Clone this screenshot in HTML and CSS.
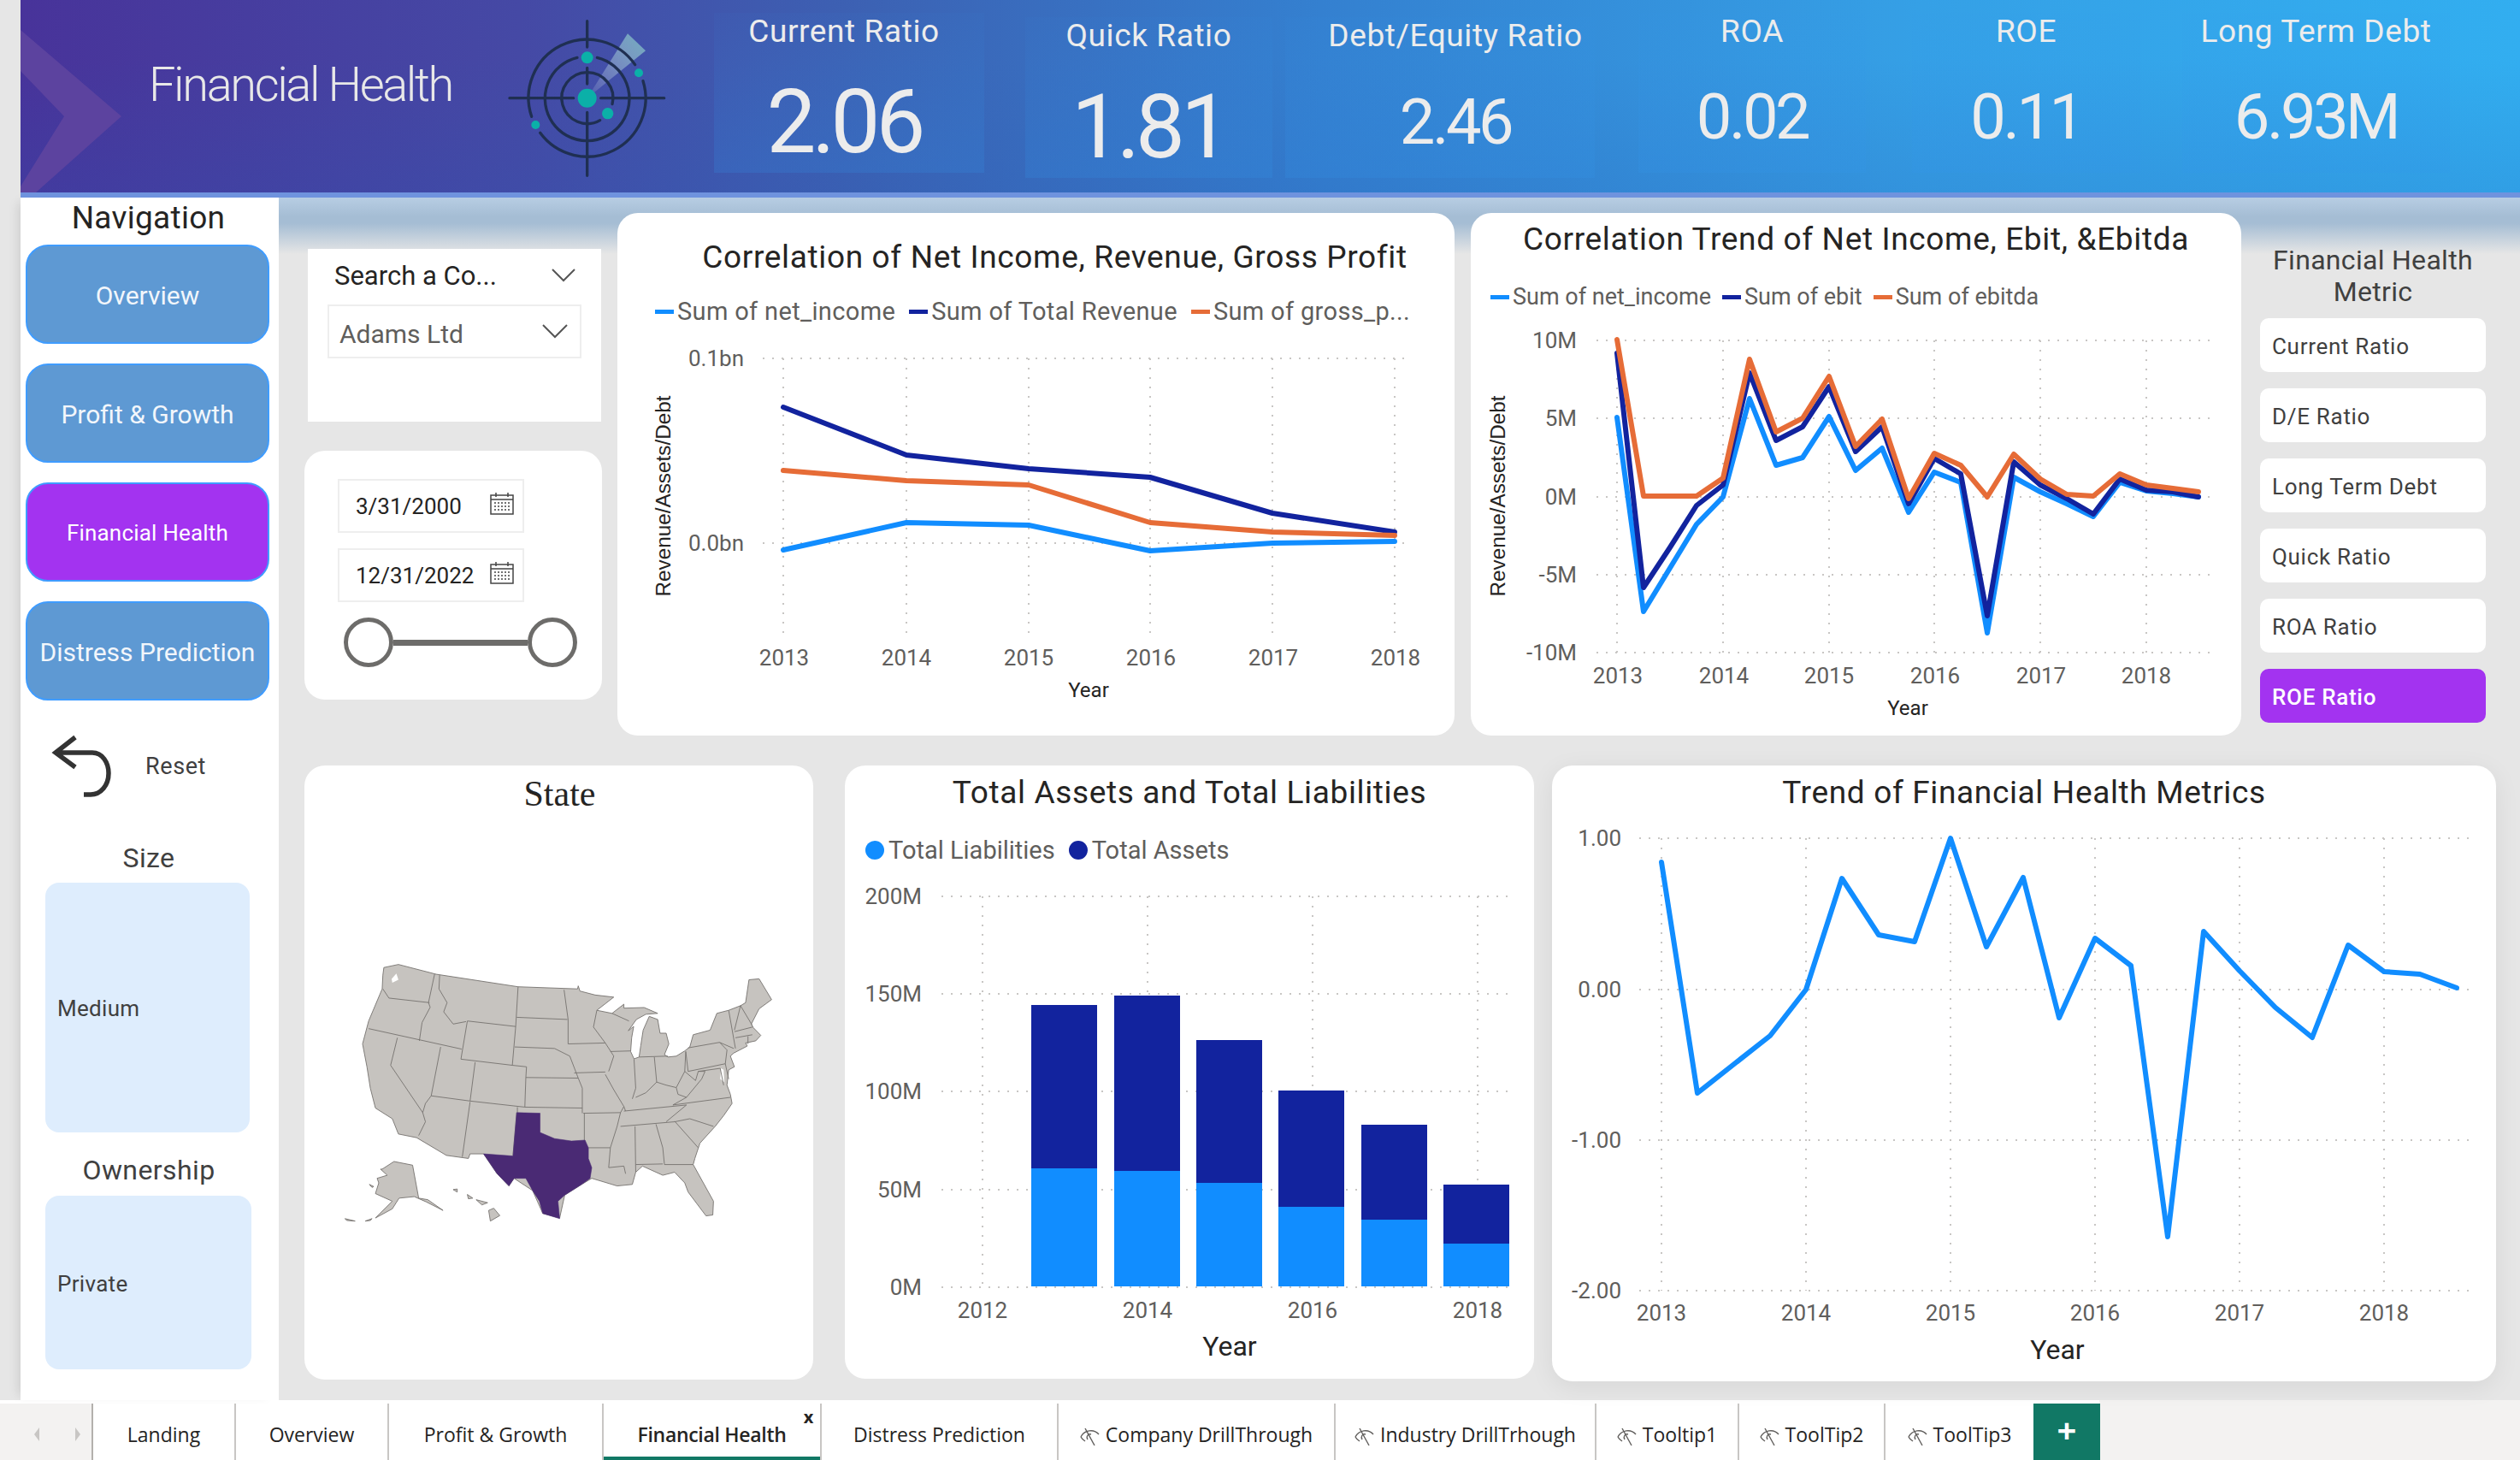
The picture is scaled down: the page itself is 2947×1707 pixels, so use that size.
FILE: index.html
```html
<!DOCTYPE html>
<html lang="en">
<head>
    <meta charset="UTF-8">
    <title>Financial Health</title>
    <link rel="stylesheet" href="styles.css">
</head>
<body>
    <header class="topbar">
        <svg class="chevron" width="130" height="225" viewBox="24 0 130 225"><polygon points="24,35 142,136 42,225 24,225 24,218 75,136 24,83" fill="#5c439f"/></svg>
        <h1 class="page-title">Financial Health</h1>
        <svg class="logo" width="220" height="210" viewBox="0 0 660 630">
            <defs>
                <linearGradient id="beam" x1="0" y1="1" x2="1" y2="0">
                    <stop offset="0" stop-color="#fff" stop-opacity=".05"/>
                    <stop offset="1" stop-color="#7fc9c4" stop-opacity=".75"/>
                </linearGradient>
            </defs>
            <polygon points="320,314 462,88 525,148" fill="url(#beam)"/>
            <g fill="none" stroke="#1f2f52" stroke-width="10" stroke-linecap="round">
                <path d="M488,197 A205,205 0 0 0 125,379"/>
                <path d="M155,436 A205,205 0 0 0 516,254"/>
                <path d="M355,172 A148,148 0 1 1 285,172"/>
                <path d="M408,335 A90,90 0 1 0 365,392"/>
                <path d="M320,44 V135 M320,208 V264 M320,364 V586 M48,314 H272 M368,314 H590"/>
            </g>
            <g fill="#0bb0a8">
                <circle cx="320" cy="314" r="33"/>
                <circle cx="320" cy="172" r="21"/>
                <circle cx="392" cy="368" r="20"/>
                <circle cx="501" cy="226" r="15"/>
                <circle cx="139" cy="408" r="15"/>
            </g>
        </svg>
        <div class="kpi kpi-a"><div class="kpi-label">Current Ratio</div><div class="kpi-big kpi-big-a">2.06</div></div>
        <div class="kpi kpi-b"><div class="kpi-label">Quick Ratio</div><div class="kpi-big kpi-big-b">1.81</div></div>
        <div class="kpi kpi-c"><div class="kpi-label">Debt/Equity Ratio</div><div class="kpi-mid kpi-mid-c">2.46</div></div>
        <div class="kpi kpi-d"><div class="kpi-label">ROA</div><div class="kpi-mid">0.02</div></div>
        <div class="kpi kpi-e"><div class="kpi-label">ROE</div><div class="kpi-mid">0.11</div></div>
        <div class="kpi kpi-f"><div class="kpi-label">Long Term Debt</div><div class="kpi-mid">6.93M</div></div>
    </header>

    <div class="body-row">
        <aside class="sidebar">
            <h2 class="nav-title">Navigation</h2>
            <nav class="nav-list">
                <div class="nav-btn">Overview</div>
                <div class="nav-btn">Profit &amp; Growth</div>
                <div class="nav-btn nav-active">Financial Health</div>
                <div class="nav-btn">Distress Prediction</div>
            </nav>
            <div class="reset">
                <svg width="72" height="78" viewBox="60 856 72 78"><path d="M88,862 L65,880 L88,897 M65,880 H108 C120,880 127,892 127,904 C127,918 118,929 106,929 H98" fill="none" stroke="#333" stroke-width="5.5"/></svg>
                <span>Reset</span>
            </div>
            <div class="side-label side-size">Size</div>
            <div class="side-box box-size">Medium</div>
            <div class="side-label side-own">Ownership</div>
            <div class="side-box box-own">Private</div>
        </aside>

        <main class="content">
            <div class="row-top">
                <div class="filters">
                    <section class="search-panel">
                        <div class="search-head">
                            <span>Search a Co...</span>
                            <svg width="28" height="16" viewBox="0 0 28 16"><polyline points="1,1 14,14 27,1" fill="none" stroke="#555" stroke-width="2"/></svg>
                        </div>
                        <div class="dropdown">
                            <span>Adams Ltd</span>
                            <svg width="30" height="17" viewBox="0 0 30 17"><polyline points="1,1 15,15 29,1" fill="none" stroke="#555" stroke-width="2"/></svg>
                        </div>
                    </section>
                    <section class="date-panel">
                        <div class="date-box">
                            <span>3/31/2000</span>
                            <svg width="28" height="26" viewBox="0 0 28 26"><use href="#cal"/></svg>
                        </div>
                        <div class="date-box">
                            <span>12/31/2022</span>
                            <svg width="28" height="26" viewBox="0 0 28 26">
                                <g id="cal" fill="none" stroke="#444" stroke-width="1.5">
                                    <rect x="1" y="3" width="26" height="22"/>
                                    <path d="M1,8 H27 M7,0 V5 M21,0 V5" />
                                    <path d="M5,12 H23 M5,16 H23 M5,20 H23" stroke-dasharray="2 2"/>
                                </g>
                            </svg>
                        </div>
                        <div class="slider">
                            <span class="knob"></span>
                            <span class="track"></span>
                            <span class="knob"></span>
                        </div>
                    </section>
                </div>

                <section class="card card-corr">
                    <h3 class="card-title title-corr">Correlation of Net Income, Revenue, Gross Profit</h3>
                    <div class="legend legend-corr">
                        <span class="key"><i class="dash c-light"></i>Sum of net_income</span>
                        <span class="key"><i class="dash c-dark"></i>Sum of Total Revenue</span>
                        <span class="key"><i class="dash c-orange"></i>Sum of gross_p...</span>
                    </div>
                    <svg class="chart" width="979" height="476" viewBox="722 384 979 476">
                        <g class="grid">
                            <path d="M892,419 H1648 M892,635 H1648"/>
                            <path d="M916,419 V746 M1060,419 V746 M1203,419 V746 M1345,419 V746 M1488,419 V746 M1631,419 V746"/>
                        </g>
                        <g class="tick end">
                            <text x="870" y="428">0.1bn</text>
                            <text x="870" y="644">0.0bn</text>
                        </g>
                        <g class="tick mid">
                            <text x="917" y="778">2013</text>
                            <text x="1060" y="778">2014</text>
                            <text x="1203" y="778">2015</text>
                            <text x="1346" y="778">2016</text>
                            <text x="1489" y="778">2017</text>
                            <text x="1632" y="778">2018</text>
                        </g>
                        <text class="axis-name" x="1273" y="815">Year</text>
                        <text class="axis-side" transform="translate(784 580) rotate(-90)" textLength="235" lengthAdjust="spacingAndGlyphs">Revenue/Assets/Debt</text>
                        <polyline class="line s-dark" points="916,476 1060,532 1203,548 1345,558 1488,600 1631,622"/>
                        <polyline class="line s-orange" points="916,550 1060,562 1203,567 1345,611 1488,622 1631,626"/>
                        <polyline class="line s-light" points="916,643 1060,611 1203,614 1345,644 1488,635 1631,633"/>
                    </svg>
                </section>

                <section class="card card-trend3">
                    <h3 class="card-title title-trend3">Correlation Trend of Net Income, Ebit, &amp;Ebitda</h3>
                    <div class="legend legend-trend3">
                        <span class="key"><i class="dash c-light"></i>Sum of net_income</span>
                        <span class="key"><i class="dash c-dark"></i>Sum of ebit</span>
                        <span class="key"><i class="dash c-orange"></i>Sum of ebitda</span>
                    </div>
                    <svg class="chart" width="901" height="493" viewBox="1720 367 901 493">
                        <g class="grid">
                            <path d="M1867,398 H2590 M1867,489 H2590 M1867,581 H2590 M1867,672 H2590 M1867,763 H2590"/>
                            <path d="M1891,398 V763 M2015,398 V763 M2139,398 V763 M2262,398 V763 M2386,398 V763 M2510,398 V763"/>
                        </g>
                        <g class="tick end">
                            <text x="1844" y="407">10M</text>
                            <text x="1844" y="498">5M</text>
                            <text x="1844" y="590">0M</text>
                            <text x="1844" y="681">-5M</text>
                            <text x="1844" y="772">-10M</text>
                        </g>
                        <g class="tick mid">
                            <text x="1892" y="799">2013</text>
                            <text x="2016" y="799">2014</text>
                            <text x="2139" y="799">2015</text>
                            <text x="2263" y="799">2016</text>
                            <text x="2387" y="799">2017</text>
                            <text x="2510" y="799">2018</text>
                        </g>
                        <text class="axis-name" x="2231" y="836">Year</text>
                        <text class="axis-side" transform="translate(1760 580) rotate(-90)" textLength="235" lengthAdjust="spacingAndGlyphs">Revenue/Assets/Debt</text>
                        <polyline class="line s-light" points="1891,488 1922,715 1953,664 1984,613 2015,581 2046,466 2077,544 2108,535 2139,487 2170,550 2201,524 2232,599 2262,552 2293,564 2324,740 2355,558 2386,575 2417,589 2448,604 2479,564 2510,574 2541,577 2571,581"/>
                        <polyline class="line s-dark" points="1891,413 1922,687 1953,640 1984,591 2015,567 2046,436 2077,515 2108,499 2139,452 2170,528 2201,499 2232,589 2262,536 2293,554 2324,720 2355,540 2386,567 2417,583 2448,601 2479,560 2510,573 2541,575 2571,581"/>
                        <polyline class="line s-orange" points="1891,397 1922,580 1953,580 1984,580 2015,559 2046,420 2077,505 2108,489 2139,440 2170,522 2201,490 2232,583 2262,530 2293,544 2324,581 2355,531 2386,560 2417,578 2448,580 2479,554 2510,567 2541,571 2571,575"/>
                    </svg>
                </section>

                <section class="metrics">
                    <h3 class="metrics-title">Financial Health<br>Metric</h3>
                    <div class="metric-btn">Current Ratio</div>
                    <div class="metric-btn">D/E Ratio</div>
                    <div class="metric-btn">Long Term Debt</div>
                    <div class="metric-btn">Quick Ratio</div>
                    <div class="metric-btn">ROA Ratio</div>
                    <div class="metric-btn metric-active">ROE Ratio</div>
                </section>
            </div>

            <div class="row-bottom">
                <section class="card card-map">
                    <h3 class="map-title">State</h3>
                    <svg class="chart" width="595" height="660" viewBox="40 176 1505 1848" preserveAspectRatio="none">
                        <path class="land" d="M275,675 L318,665 L430,697 L672,738 L848,745 L850,735 L855,752 L900,765 L955,772 L905,815 L950,825 L985,795 L985,808 L1045,806 L1085,825 L1050,828 L1022,845 L998,882 L1014,868 L1008,905 L1005,950 L1015,974 L1030,968 L1035,930 L1042,880 L1060,835 L1085,845 L1092,890 L1110,890 L1118,925 L1105,960 L1115,968 L1140,965 L1165,948 L1180,935 L1190,895 L1240,880 L1260,825 L1295,815 L1330,800 L1345,790 L1355,715 L1385,712 L1422,780 L1385,810 L1362,860 L1368,872 L1390,897 L1375,915 L1345,922 L1350,932 L1310,955 L1300,965 L1312,1000 L1295,1010 L1290,1060 L1300,1090 L1305,1120 L1280,1160 L1255,1195 L1210,1250 L1195,1300 L1190,1320 L1250,1440 L1248,1485 L1228,1488 L1175,1410 L1165,1380 L1135,1345 L1100,1355 L1040,1325 L1020,1345 L1010,1385 L965,1390 L890,1365 L860,1385 L810,1420 L795,1495 L745,1480 L715,1405 L660,1365 L645,1390 L610,1350 L570,1285 L530,1285 L525,1300 L460,1290 L372,1232 L318,1220 L300,1170 L250,1135 L235,1070 L225,1000 L212,925 L230,850 L270,745 L272,700 Z"/>
                        <path class="land" d="M270,1335 L305,1310 L360,1322 L378,1430 L405,1435 L450,1470 L400,1442 L365,1425 L320,1430 L300,1465 L250,1495 L300,1440 L250,1415 L260,1380 L255,1365 L285,1355 L265,1335 Z"/>
                        <path class="land" d="M585,1470 L600,1463 L618,1487 L590,1505 Z M480,1402 L492,1400 L492,1410 Z M522,1418 L538,1430 L525,1432 Z M548,1435 L582,1445 L565,1452 Z M160,1497 L190,1505 L165,1503 Z M220,1505 L240,1497 L235,1503 Z M232,1385 L245,1392 L240,1395 Z"/>
                        <path class="puget" d="M312,695 L318,715 L300,725 L298,712 Z M1272,1005 L1280,1010 L1282,1050 L1270,1040 Z"/>
                        <path class="borders" d="M272,745 L290,775 L410,790 M425,697 L407,790 L412,805 L388,855 L380,915 M230,875 L505,942 M440,700 L438,745 L462,790 L452,820 L480,860 L518,852 M522,850 L665,868 L655,995 L503,975 Z M672,738 L665,868 M668,838 L818,845 M808,748 L820,845 L820,925 M662,935 L780,940 L825,965 L850,1037 M655,995 L697,1000 L695,1035 L850,1037 M820,925 L930,922 M905,815 L895,870 L930,922 L955,965 L940,1015 M838,1020 L930,1017 M945,950 L1005,948 M950,825 L1000,850 M1015,975 L1020,1070 L1010,1105 M930,1025 L955,1075 L985,1130 L990,1145 M1075,968 L1082,1050 M1030,968 L1115,965 M1082,1050 L1110,1060 L1140,1068 L1165,1015 L1168,950 L1175,1015 L1285,990 M1175,938 L1268,920 L1290,945 L1285,990 M1268,920 L1310,940 M1295,815 L1315,940 M1330,800 L1312,880 M1330,800 L1365,865 M1312,885 L1365,870 M1315,905 L1365,895 M1352,900 L1352,925 M1285,990 L1295,1040 M1205,1015 L1270,1005 L1280,1060 M1140,1068 L1145,1090 L1170,1100 L1215,1040 L1225,1015 L1205,1015 L1197,1045 L1165,1015 M1130,1125 L1300,1100 M985,1145 L1170,1125 L1110,1180 M1020,1100 L1050,1085 L1082,1050 M1130,1125 L1170,1100 M975,1195 L1135,1180 L1180,1170 L1250,1195 M1135,1178 L1205,1265 M1080,1188 L1100,1265 L1105,1320 L1190,1320 M1018,1195 L1020,1345 M965,1195 L945,1265 L940,1330 L985,1325 L990,1350 M1020,1320 L1100,1318 M865,1152 L975,1150 L965,1195 M880,1265 L945,1265 M868,1152 L868,1240 M985,1130 L975,1150 M695,1035 L692,1132 L862,1135 M850,1037 L862,1070 L862,1152 M545,985 L530,1112 L692,1132 M670,1132 L670,1150 M443,935 L415,1095 L530,1112 M315,905 L295,995 L390,1150 L398,1120 L415,1095 M530,1115 L507,1295 M390,1150 L398,1180 L378,1225 M668,1150 L657,1290"/>
                        <polygon class="texas" points="668,1150 737,1152 737,1215 780,1235 830,1243 870,1240 880,1265 880,1300 890,1330 885,1365 860,1385 810,1420 790,1440 795,1497 745,1480 735,1440 715,1405 695,1365 660,1365 645,1390 610,1350 570,1285 657,1292"/>
                    </svg>
                </section>

                <section class="card card-bars">
                    <h3 class="card-title">Total Assets and Total Liabilities</h3>
                    <div class="legend legend-bars">
                        <span class="key"><i class="dot c-light"></i>Total Liabilities</span>
                        <span class="key"><i class="dot c-dark"></i>Total Assets</span>
                    </div>
                    <svg class="chart" width="806" height="598" viewBox="988 1014 806 598">
                        <g class="grid">
                            <path d="M1101,1048 H1766 M1101,1162 H1766 M1101,1276 H1766 M1101,1391 H1766 M1101,1505 H1766"/>
                            <path d="M1149,1048 V1505 M1342,1048 V1505 M1535,1048 V1505 M1728,1048 V1505"/>
                        </g>
                        <g class="tick end">
                            <text x="1078" y="1057">200M</text>
                            <text x="1078" y="1171">150M</text>
                            <text x="1078" y="1285">100M</text>
                            <text x="1078" y="1400">50M</text>
                            <text x="1078" y="1514">0M</text>
                        </g>
                        <g class="tick mid">
                            <text x="1149" y="1541">2012</text>
                            <text x="1342" y="1541">2014</text>
                            <text x="1535" y="1541">2016</text>
                            <text x="1728" y="1541">2018</text>
                        </g>
                        <text class="axis-name axis-big" x="1438" y="1585">Year</text>
                        <g class="f-dark">
                            <rect x="1206" y="1175" width="77" height="191"/>
                            <rect x="1303" y="1164" width="77" height="205"/>
                            <rect x="1399" y="1216" width="77" height="167"/>
                            <rect x="1495" y="1275" width="77" height="136"/>
                            <rect x="1592" y="1315" width="77" height="111"/>
                            <rect x="1688" y="1385" width="77" height="69"/>
                        </g>
                        <g class="f-light">
                            <rect x="1206" y="1366" width="77" height="138"/>
                            <rect x="1303" y="1369" width="77" height="135"/>
                            <rect x="1399" y="1383" width="77" height="121"/>
                            <rect x="1495" y="1411" width="77" height="93"/>
                            <rect x="1592" y="1426" width="77" height="78"/>
                            <rect x="1688" y="1454" width="77" height="50"/>
                        </g>
                    </svg>
                </section>

                <section class="card card-metrics">
                    <h3 class="card-title">Trend of Financial Health Metrics</h3>
                    <svg class="chart" width="1104" height="668" viewBox="1815 947 1104 668">
                        <g class="grid">
                            <path d="M1917,980 H2892 M1917,1157 H2892 M1917,1333 H2892 M1917,1509 H2892"/>
                            <path d="M1943,980 V1509 M2112,980 V1509 M2281,980 V1509 M2450,980 V1509 M2619,980 V1509 M2788,980 V1509"/>
                        </g>
                        <g class="tick end">
                            <text x="1896" y="989">1.00</text>
                            <text x="1896" y="1166">0.00</text>
                            <text x="1896" y="1342">-1.00</text>
                            <text x="1896" y="1518">-2.00</text>
                        </g>
                        <g class="tick mid">
                            <text x="1943" y="1544">2013</text>
                            <text x="2112" y="1544">2014</text>
                            <text x="2281" y="1544">2015</text>
                            <text x="2450" y="1544">2016</text>
                            <text x="2619" y="1544">2017</text>
                            <text x="2788" y="1544">2018</text>
                        </g>
                        <text class="axis-name axis-big" x="2406" y="1589">Year</text>
                        <polyline class="line s-light" points="1943,1008 1985,1278 2028,1244 2070,1211 2112,1157 2154,1027 2197,1093 2239,1101 2281,980 2323,1107 2366,1026 2408,1190 2450,1097 2492,1129 2535,1446 2577,1089 2619,1135 2661,1178 2704,1213 2746,1105 2788,1136 2830,1139 2873,1155"/>
                    </svg>
                </section>
            </div>
        </main>
    </div>

    <footer class="tabs">
        <div class="tab-arrows">
            <svg width="54" height="20" viewBox="0 0 54 20"><path d="M6,2 L0,10 L6,18 Z M48,2 L54,10 L48,18 Z" fill="#c8c6c4"/></svg>
        </div>
        <div class="tab tab-1">Landing</div>
        <div class="tab tab-2">Overview</div>
        <div class="tab tab-3">Profit &amp; Growth</div>
        <div class="tab tab-4 tab-active">Financial Health<span class="tab-close">x</span></div>
        <div class="tab tab-5">Distress Prediction</div>
        <div class="tab tab-6"><svg class="eye" width="24" height="24" viewBox="0 0 24 24"><use href="#eye-off"/></svg>Company DrillThrough</div>
        <div class="tab tab-7"><svg class="eye" width="24" height="24" viewBox="0 0 24 24"><use href="#eye-off"/></svg>Industry DrillTrhough</div>
        <div class="tab tab-8"><svg class="eye" width="24" height="24" viewBox="0 0 24 24"><use href="#eye-off"/></svg>Tooltip1</div>
        <div class="tab tab-9"><svg class="eye" width="24" height="24" viewBox="0 0 24 24"><use href="#eye-off"/></svg>ToolTip2</div>
        <div class="tab tab-10"><svg class="eye" width="24" height="24" viewBox="0 0 24 24">
            <g id="eye-off" fill="none" stroke="#605e5c" stroke-width="1.4">
                <path d="M1,13 C5,5 16,3 22,10 M6,18 C3,16 2,15 1,13 M13,10 C9,9 7,13 9,16"/>
                <path d="M6,3 L17,23"/>
            </g>
        </svg>ToolTip3</div>
        <div class="tab-add">+</div>
    </footer>
</body>
</html>
```

FILE: styles.css
```css
* {
    box-sizing: border-box;
}

html,
body {
    margin: 0;
    padding: 0;
}

body {
    width: 2947px;
    height: 1707px;
    overflow: hidden;
    background: #e6e6e6;
    font-family: Roboto, "Liberation Sans", sans-serif;
    color: #252423;
}

h1,
h2,
h3 {
    margin: 0;
    font-weight: 400;
}

/* top banner */
.topbar {
    position: relative;
    display: flex;
    align-items: flex-start;
    height: 231px;
    margin-left: 24px;
    border-bottom: 6px solid #6f93de;
    background:
        linear-gradient(180deg, rgba(40, 90, 180, 0) 30%, rgba(40, 90, 180, .18) 100%),
        linear-gradient(90deg, #48339a 0, #4549a5 20%, #3c62b4 34%, #3480d0 52%, #35a0e6 76%, #32aef0 100%);
}

.chevron {
    position: absolute;
    left: 0;
    top: 0;
}

.page-title {
    position: relative;
    flex: none;
    width: 406px;
    margin: 64px 0 0 150px;
    font-size: 56px;
    font-weight: 300;
    line-height: 70px;
    letter-spacing: -2.4px;
    color: #e8e8e8;
    white-space: nowrap;
}

.logo {
    flex: none;
    margin-top: 10px;
}

.kpi {
    flex: none;
    height: 187px;
    margin-top: 15px;
    text-align: center;
    color: #ececec;
    background: linear-gradient(180deg, rgba(50, 150, 235, .04), rgba(50, 150, 235, .2));
}

.kpi-a { width: 316px; margin-left: 35px; padding-right: 12px; }
.kpi-b { width: 289px; margin-left: 48px; margin-top: 20px; height: 188px; }
.kpi-c { width: 362px; margin-left: 15px; margin-top: 20px; height: 188px; padding-left: 36px; }
.kpi-d { width: 266px; margin-left: 51px; }
.kpi-e { width: 267px; margin-left: 54px; }
.kpi-f { width: 313px; margin-left: 49px; }

.kpi-label {
    font-size: 37px;
    line-height: 44px;
    letter-spacing: .6px;
    white-space: nowrap;
}

.kpi-big {
    font-size: 103px;
    line-height: 110px;
    letter-spacing: -5px;
}

.kpi-big-a { margin-top: 29px; }
.kpi-big-b { margin-top: 30px; }

.kpi-mid {
    margin-top: 38px;
    font-size: 74px;
    line-height: 80px;
    letter-spacing: -3.5px;
}

.kpi-mid-c { margin-top: 39px; }

/* page body */
.body-row {
    display: flex;
    height: 1406px;
    margin-left: 24px;
}

.sidebar {
    flex: none;
    width: 302px;
    background: #fff;
    box-shadow: -8px 0 12px -6px rgba(0, 0, 0, .12);
}

.nav-title {
    height: 44px;
    padding: 2px 3px 0 0;
    font-size: 37px;
    line-height: 44px;
    letter-spacing: .3px;
    text-align: center;
    color: #252423;
}

.nav-list {
    display: flex;
    flex-direction: column;
    gap: 23px;
    margin: 11px 11px 0 6px;
}

.nav-btn {
    display: flex;
    align-items: center;
    justify-content: center;
    height: 116px;
    padding-top: 2px;
    border: 2px solid #3f9cff;
    border-radius: 26px;
    background: #5e99d3;
    color: #f2f6fb;
    font-size: 30px;
    white-space: nowrap;
}

.nav-active {
    background: #a333f0;
    color: #fff;
    font-size: 26px;
    letter-spacing: .2px;
}

.reset {
    display: flex;
    align-items: center;
    height: 78px;
    margin: 37px 0 0 36px;
    font-size: 27px;
    letter-spacing: .6px;
    color: #404040;
}

.reset span {
    margin: 2px 0 0 38px;
}

.side-label {
    height: 44px;
    padding-right: 2px;
    font-size: 32px;
    line-height: 44px;
    letter-spacing: .4px;
    text-align: center;
    color: #404040;
}

.side-size { margin-top: 47px; }
.side-own { margin-top: 22px; }

.side-box {
    display: flex;
    align-items: center;
    margin-left: 29px;
    padding: 2px 0 0 14px;
    border-radius: 16px;
    background: #deedfd;
    font-size: 26px;
    letter-spacing: .3px;
    color: #404040;
}

.box-size { width: 239px; height: 292px; margin-top: 7px; }
.box-own { width: 241px; height: 203px; margin-top: 8px; }

.content {
    flex: 1;
    padding: 18px 0 0 30px;
    background: linear-gradient(180deg, #b7cde3 0, #a5bdd4 22px, #a5bdd4 30px, #e6e6e6 66px);
}

.row-top {
    display: flex;
    align-items: flex-start;
    height: 611px;
}

.row-bottom {
    display: flex;
    align-items: flex-start;
    height: 720px;
    margin-top: 35px;
}

.card {
    flex: none;
    overflow: hidden;
    border-radius: 24px;
    background: #fff;
}

.card-corr { width: 979px; height: 611px; margin-left: 18px; }
.card-trend3 { width: 901px; height: 611px; margin-left: 19px; }
.card-map { width: 595px; height: 718px; }
.card-bars { width: 806px; height: 717px; margin-left: 37px; }
.card-metrics { width: 1104px; height: 720px; margin-left: 21px; box-shadow: 0 6px 30px rgba(0, 0, 0, .07); }

.card-title {
    height: 52px;
    padding-top: 10px;
    font-size: 37px;
    line-height: 44px;
    letter-spacing: .65px;
    text-align: center;
    white-space: nowrap;
}

.title-corr {
    height: 74px;
    padding: 30px 0 0 44px;
}

.title-trend3 {
    height: 53px;
    padding-top: 9px;
}

.chart {
    display: block;
}

.map-title {
    height: 58px;
    padding: 8px 0 0 2px;
    font-family: "Liberation Serif", serif;
    font-size: 42px;
    line-height: 50px;
    text-align: center;
}

/* legends */
.legend {
    display: flex;
    align-items: center;
    height: 40px;
    font-size: 29px;
    color: #605e5c;
    white-space: nowrap;
}

.legend-corr { margin-top: 21px; padding-left: 44px; gap: 16px; letter-spacing: .35px; }
.legend-trend3 { margin-top: 25px; padding-left: 23px; gap: 13px; font-size: 27px; }
.legend-bars { margin-top: 27px; padding-left: 24px; gap: 16px; }

.key {
    display: flex;
    align-items: center;
}

.dash {
    flex: none;
    width: 22px;
    height: 5px;
    margin-right: 4px;
}

.dot {
    flex: none;
    width: 22px;
    height: 22px;
    margin-right: 5px;
    border-radius: 50%;
}

.c-light { background: #118dff; }
.c-dark { background: #12239e; }
.c-orange { background: #e66c37; }

/* svg chart parts */
.grid path {
    fill: none;
    stroke: #c8c6c4;
    stroke-width: 2;
    stroke-dasharray: 2 9;
}

.tick text {
    font-size: 26px;
    fill: #605e5c;
}

.tick.end text { text-anchor: end; }
.tick.mid text { text-anchor: middle; }

.axis-name {
    font-size: 24px;
    fill: #252423;
    text-anchor: middle;
}

.axis-big {
    font-size: 32px;
}

.axis-side {
    font-family: "Liberation Sans", sans-serif;
    font-size: 23px;
    fill: #252423;
    text-anchor: middle;
}

.line {
    fill: none;
    stroke-width: 6;
    stroke-linejoin: round;
    stroke-linecap: round;
}

.s-light { stroke: #118dff; }
.s-dark { stroke: #12239e; }
.s-orange { stroke: #e66c37; }
.f-light { fill: #118dff; }
.f-dark { fill: #12239e; }

/* us map */
.land {
    fill: #c6c3bf;
    stroke: #75726f;
    stroke-width: 2.4;
    stroke-linejoin: round;
}

.puget { fill: #fff; }

.borders {
    fill: none;
    stroke: #75726f;
    stroke-width: 2.4;
}

.texas {
    fill: #4a2a74;
    stroke: #4a2a74;
    stroke-width: 1.5;
}

/* slicers */
.filters {
    flex: none;
    width: 348px;
    padding-top: 42px;
}

.search-panel {
    width: 343px;
    height: 202px;
    margin-left: 4px;
    padding-top: 11px;
    background: #fff;
}

.search-head {
    display: flex;
    align-items: center;
    justify-content: space-between;
    height: 40px;
    padding: 0 30px 0 31px;
    font-size: 31px;
    color: #252423;
}

.dropdown {
    display: flex;
    align-items: center;
    justify-content: space-between;
    width: 297px;
    height: 63px;
    margin: 14px 0 0 23px;
    padding: 0 14px 0 12px;
    border: 2px solid #eee;
    font-size: 30px;
    color: #605e5c;
}

.dropdown span {
    padding-top: 6px;
}

.date-panel {
    height: 291px;
    margin-top: 34px;
    padding: 33px 0 0 39px;
    border-radius: 24px;
    background: #fff;
}

.date-box {
    display: flex;
    align-items: center;
    justify-content: space-between;
    width: 218px;
    height: 63px;
    margin-bottom: 18px;
    padding: 0 10px 0 19px;
    border: 2px solid #eee;
    font-size: 26px;
    color: #252423;
}

.date-box svg {
    margin-bottom: 6px;
}

.slider {
    display: flex;
    align-items: center;
    width: 273px;
    height: 58px;
    margin: 17px 0 0 7px;
}

.knob {
    flex: none;
    width: 58px;
    height: 58px;
    border: 5px solid #6d6c6a;
    border-radius: 50%;
    background: #fff;
}

.track {
    flex: 1;
    height: 7px;
    background: #6d6c6a;
}

.metrics {
    flex: none;
    width: 264px;
    margin-left: 22px;
    padding-top: 37px;
}

.metrics-title {
    height: 75px;
    margin-bottom: 11px;
    font-size: 32px;
    line-height: 37px;
    letter-spacing: .3px;
    text-align: center;
    color: #404040;
    white-space: nowrap;
}

.metric-btn {
    display: flex;
    align-items: center;
    height: 63px;
    margin-bottom: 19px;
    padding: 2px 0 0 14px;
    border-radius: 10px;
    background: #fff;
    font-size: 26px;
    letter-spacing: .7px;
    color: #404040;
}

.metric-active {
    background: #a333f0;
    color: #fff;
    font-weight: 500;
}

/* report tabs */
.tabs {
    display: flex;
    height: 70px;
    padding-top: 4px;
    background: linear-gradient(90deg, #fff 0, #fff 2455px, #f3f2f1 2455px);
    font-family: "Open Sans", "Liberation Sans", sans-serif;
    font-size: 23px;
    color: #252423;
}

.tab-arrows {
    flex: none;
    display: flex;
    align-items: center;
    width: 109px;
    padding: 6px 0 0 40px;
    border-right: 2px solid #b3b0ad;
    background: #f3f2f1;
}

.tab {
    position: relative;
    flex: none;
    display: flex;
    align-items: center;
    justify-content: center;
    padding-top: 6px;
    border-right: 2px solid #c8c6c4;
    white-space: nowrap;
}

.tab-1 { width: 167px; }
.tab-2 { width: 179px; }
.tab-3 { width: 251px; }
.tab-4 { width: 255px; }
.tab-5 { width: 277px; }
.tab-6 { width: 324px; }
.tab-7 { width: 305px; }
.tab-8 { width: 167px; }
.tab-9 { width: 171px; }
.tab-10 { width: 173px; border-right: 0; }

.tab-active {
    box-shadow: inset 0 -4px 0 #117865;
    font-weight: 600;
    letter-spacing: -.3px;
}

.tab-close {
    position: absolute;
    top: 4px;
    right: 8px;
    font-size: 20px;
    font-weight: 700;
    line-height: 24px;
}

.eye {
    flex: none;
    margin: 4px 6px 0 0;
}

.tab-add {
    flex: none;
    width: 78px;
    text-align: center;
    background: #117865;
    color: #fff;
    font-size: 40px;
    font-weight: 700;
    line-height: 62px;
}
```
